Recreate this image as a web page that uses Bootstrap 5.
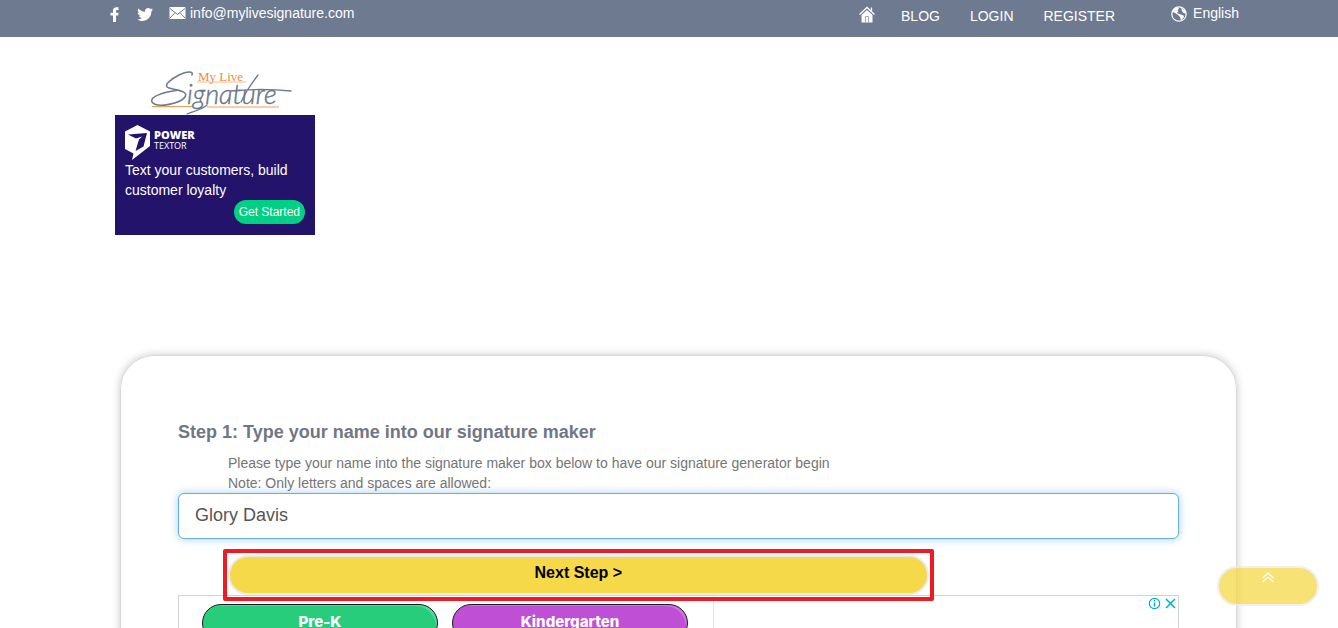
<!DOCTYPE html>
<html lang="en">
<head>
<meta charset="utf-8">
<meta name="viewport" content="width=device-width, initial-scale=1">
<title>My Live Signature</title>
<link href="https://cdn.jsdelivr.net/npm/bootstrap@5.3.0/dist/css/bootstrap.min.css" rel="stylesheet">
<style>
  body { font-family: "Liberation Sans", Arial, sans-serif; font-size: 14px; line-height: 20px; color: #6f7787; }
  .page-width { max-width: 1140px; width: 100%; }
  .topbar { background: #6d7a90; padding-bottom: 11px; }
  .topbar a, .topbar button { color: #fff; text-decoration: none; }
  .topbar-social { gap: 16px; padding-left: 8px; padding-top: 3px; }
  .topbar-menu { gap: 30px; padding-top: 6px; }
  .topbar-home { margin-right: -4px; }
  .topbar-lang { padding-top: 3px; margin-left: 56px; }
  .lang-btn { font-size: 14px; line-height: 20px; gap: 6px; }
  .brand { padding: 32px 16px 0 16px; }
  .brand-logo { margin-left: 34px; }
  .promo { width: 200px; height: 120px; background: #24136b; color: #fff; padding: 10px; }
  .promo-title { padding: 4px 0 0 3px; }
  .promo-name { font-family: "Open Sans", sans-serif; font-size: 11px; line-height: 12px; font-weight: 800; }
  .promo-sub { font-family: "Open Sans", sans-serif; font-size: 9px; line-height: 9px; }
  .promo-btn { background: #00d084; color: #fff; font-size: 12px; line-height: 24px; padding: 0 5px; }
  .promo-btn:hover { background: #00b974; color: #fff; }
  .maker { margin: 120px 2px 0 21px; padding: 64px 57px 0; border: 1px solid #d8d8d8; border-bottom: 0; border-radius: 34px 34px 0 0; box-shadow: 0 0 8px rgba(0,0,0,.22); }
  .maker-title { font-size: 18px; line-height: 24px; font-weight: 700; margin-bottom: 9px; }
  .maker-hint { padding-left: 50px; color: #757575; }
  .name-box { height: 46px; padding: 6px 16px 8px; font-size: 18px; color: #555; border: 1px solid #66afe9; border-radius: 6px; box-shadow: 0 0 8px rgba(102,175,233,.6); }
  .next-wrap { width: 70%; margin: 16px 0 0 50px; }
  .next-btn { height: 40px; font-size: 16px; line-height: 30px; font-weight: 700; color: #000; background: #f5d949; border: 2px solid #ebebeb; padding: 0 0 4px; }
  .next-btn:hover { background: #f0d030; color: #000; border-color: #ebebeb; }
  .callout { inset: -6px -5px; border: 4px solid #ed1c24; border-radius: 2px; pointer-events: none; z-index: 2; }
  .sponsor { height: 250px; border: 1px solid #d3d3d3; }
  .sponsor-main { width: 535px; border-right: 1px solid #e3e3e3; padding: 8px 0 0 23px; gap: 14px; }
  .grade { width: 236px; height: 38px; border: 1px solid #1c1c28; border-radius: 19px; color: #fff; font-family: Inter, sans-serif; font-weight: 800; font-size: 15px; line-height: 20px; padding: 7px 0 0; align-items: flex-start; justify-content: center; }
  .grade-green { background: #27cd7a; box-shadow: inset -4px 4px 0 -3px #4cdb95; }
  .grade-purple { background: #bf4fd5; box-shadow: inset -4px 4px 0 -3px #cf73e1; }
  .to-top { right: 19px; bottom: 22px; width: 102px; height: 40px; background: #f5d949; border: 2px solid #ebebeb; opacity: .75; padding: 0; z-index: 5; }
</style>
</head>
<body class="vh-100 overflow-hidden bg-white">

<header class="topbar">
  <div class="page-width mx-auto d-flex align-items-start">
    <div class="topbar-social d-flex align-items-start">
      <a href="#" aria-label="Facebook" class="d-block lh-1 pt-1">
        <svg width="14" height="16" viewBox="0 0 14 16" fill="#fff"><path d="M6 15V8.500H3.500V5.700H6V3.800C6 1.500 7.200.2 9.500.2H11.500V2.900H10.200C9.300 2.900 9 3.300 9 4.100V5.700H11.500L11.200 8.500H9V15Z"/></svg>
      </a>
      <a href="#" aria-label="Twitter" class="d-block lh-1 pt-1">
        <svg width="16" height="16" viewBox="0 0 16 16" fill="#fff"><path d="M16 2.500c-.6.300-1.200.5-1.900.5.700-.4 1.200-1 1.400-1.800-.6.400-1.300.6-2.100.8C12.800 1.400 12 1 11.100 1 9.300 1 7.900 2.500 7.900 4.200c0 .3 0 .5.100.7C5.300 4.800 2.900 3.500 1.300 1.600.4 3 .8 4.900 2.300 5.900c-.5 0-1-.1-1.500-.4 0 1.600 1.100 2.900 2.600 3.300-.5.100-1 .1-1.500 0 .4 1.300 1.600 2.200 3.100 2.300C3.600 12.200 1.900 12.600.2 12.400c1.500.9 3.200 1.500 5 1.500 6 0 9.400-5.100 9.200-9.700.6-.5 1.200-1 1.600-1.700Z"/></svg>
      </a>
      <a href="mailto:info@mylivesignature.com" class="d-flex gap-1 align-items-center">
        <svg width="17" height="12" viewBox="0 0 17 12"><rect x=".5" width="16" height="12" rx="1" fill="#fff"/><path d="M1 1.500l7.500 6 7.500-6M1 11l5-5.300M16 11l-5-5.300" fill="none" stroke="#6d7a90" stroke-width="1"/></svg>
        <span>info@mylivesignature.com</span>
      </a>
    </div>
    <nav class="topbar-menu d-flex ms-auto" aria-label="Main">
      <a href="#" aria-label="Home" class="topbar-home d-block lh-1">
        <svg width="16" height="17" viewBox="0 0 16 17"><path d="M.5 8.500L8 1.500l7.500 7M12.500 5V1.500" fill="none" stroke="#fff" stroke-width="1.300"/><path d="M2.500 9L8 4l5.500 5v7.500h-11Z" fill="#fff"/><path d="M6.400 16.500V10.500h3.200v6" fill="none" stroke="#9aa4b4" stroke-width="1"/></svg>
      </a>
      <a href="#">BLOG</a>
      <a href="#">LOGIN</a>
      <a href="#">REGISTER</a>
    </nav>
    <div class="topbar-lang">
      <button type="button" class="lang-btn btn border-0 p-0 d-flex align-items-center">
        <svg width="16" height="18" viewBox="0 -1 16 18"><circle cx="8" cy="9" r="7.200" fill="none" stroke="#fff" stroke-width="1.200"/><path d="M2 5L5 2.500l3 .3-.5 1.500L6.500 5l1 1.200L6 8l1.500.8L10 9.500l2.500 1 .5 1.500-2 2.500-1.200.5-.8-3L6.500 9.500 4 8 2 7ZM10 2.500l4 3 1 3-2.500-.5L11 6Z" fill="#fff"/></svg>
        <span>English</span>
      </button>
    </div>
  </div>
</header>

<div class="page-width mx-auto">
  <div class="brand">
    <a href="#" class="brand-logo d-inline-block align-top lh-1" aria-label="My Live Signature">
      <svg class="d-block" width="146" height="46" viewBox="0 0 146 46">
        <path d="M3 37.500H44M58 38H130" stroke="#f79a52" stroke-width="1.200"/>
        <path d="M48 13H97" stroke="#fbb988" stroke-width="1"/>
        <text x="49" y="12" font-family="Liberation Serif, serif" font-size="13" fill="#f08a3c">My Live</text>
        <path d="M43 6C45 2 38 2 30 6S13 17 20 19s20 3 16 9S8 40 3 33C0 28 14 23 30 21" fill="none" stroke="#6d7a90" stroke-width="1.600" stroke-linecap="round"/>
        <text x="38" y="35" font-family="Lato, sans-serif" font-weight="300" font-style="italic" font-size="27" fill="#67758b" stroke="#67758b" stroke-width=".4">ignature</text>
        <path d="M58 36C52 41 45 42 38 45M109 6C103 14 97 22 92 33M82 22C102 20 122 20 142 22" fill="none" stroke="#6d7a90" stroke-width="1.300" stroke-linecap="round"/>
      </svg>
    </a>
    <div class="promo d-flex flex-column">
      <div class="d-flex">
        <svg width="26" height="35" viewBox="0 0 26 35"><path d="M12.500 0L25 6.500V21L7 35L8.500 28.500L0 24V6.500Z" fill="#fff"/><path d="M3 9.500L22 8L18.500 21.500L10.500 26L14 14.500L17 11.500L11 13.500Z" fill="#24136b"/></svg>
        <div class="promo-title">
          <div class="promo-name">POWER</div>
          <div class="promo-sub">TEXTOR</div>
        </div>
      </div>
      <div>Text your customers, build customer loyalty</div>
      <a href="#" class="promo-btn btn border-0 rounded-pill align-self-end">Get Started</a>
    </div>
  </div>

  <main class="maker">
    <form onsubmit="return false">
      <h1 class="maker-title">Step 1: Type your name into our signature maker</h1>
      <label for="signer" class="maker-hint d-block">Please type your name into the signature maker box below to have our signature generator begin<br>Note: Only letters and spaces are allowed:</label>
      <input id="signer" type="text" class="name-box form-control" value="Glory Davis">
      <div class="next-wrap position-relative">
        <button type="submit" class="next-btn btn rounded-pill w-100 d-block">Next Step &gt;</button>
        <div class="callout position-absolute"></div>
      </div>
    </form>
    <aside class="sponsor d-flex justify-content-between">
      <div class="sponsor-main d-flex align-items-start">
        <a href="#" class="grade grade-green d-flex text-decoration-none">Pre-K</a>
        <a href="#" class="grade grade-purple d-flex text-decoration-none">Kindergarten</a>
      </div>
      <div class="d-flex align-items-start gap-1 p-1 pt-0 pe-0">
        <a href="#" aria-label="About this ad" class="lh-1"><svg class="d-block" width="13" height="14" viewBox="0 0 13 14" fill="none" stroke="#00aecd" stroke-width="1.200"><circle cx="6.500" cy="7.500" r="5.200"/><path d="M6.500 6.500v4M6.500 4v1.500" stroke-width="1.500"/></svg></a>
        <button type="button" aria-label="Close ad" class="btn border-0 p-0 lh-1"><svg class="d-block" width="13" height="14" viewBox="0 0 13 14" fill="none" stroke="#00aecd" stroke-width="1.500"><path d="M1 3l9 9M10 3l-9 9"/></svg></button>
      </div>
    </aside>
  </main>
</div>

<button type="button" class="to-top btn rounded-pill position-fixed d-flex justify-content-center align-items-start pt-1" aria-label="Back to top">
  <svg width="14" height="11" viewBox="0 0 14 11" fill="none" stroke="#fff" stroke-width="1.200"><path d="M1.500 6L7 1l5.500 5M1.500 10L7 5l5.500 5"/></svg>
</button>

<script src="https://cdn.jsdelivr.net/npm/bootstrap@5.3.0/dist/js/bootstrap.bundle.min.js"></script>
</body>
</html>
